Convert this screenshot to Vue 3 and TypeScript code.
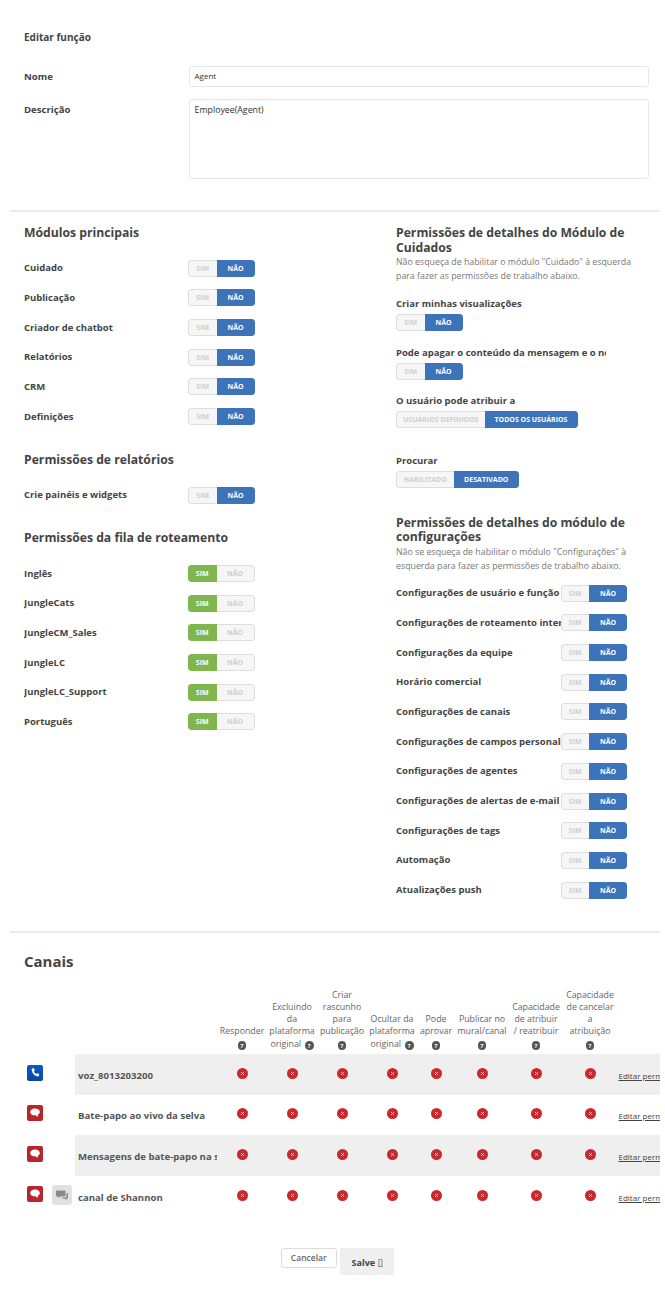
<script setup lang="ts">
const modules = ['Cuidado', 'Publicação', 'Criador de chatbot', 'Relatórios', 'CRM', 'Definições']
const queues = ['Inglês', 'JungleCats', 'JungleCM_Sales', 'JungleLC', 'JungleLC_Support', 'Português']
const settings = [
  'Configurações de usuário e função',
  'Configurações de roteamento interno',
  'Configurações da equipe',
  'Horário comercial',
  'Configurações de canais',
  'Configurações de campos personalizados',
  'Configurações de agentes',
  'Configurações de alertas de e-mail',
  'Configurações de tags',
  'Automação',
  'Atualizações push'
]
const headers: { lines: string[]; inline: boolean }[] = [
  { lines: ['Responder'], inline: false },
  { lines: ['Excluindo', 'da', 'plataforma', 'original'], inline: true },
  { lines: ['Criar', 'rascunho', 'para', 'publicação'], inline: false },
  { lines: ['Ocultar da', 'plataforma', 'original'], inline: true },
  { lines: ['Pode', 'aprovar'], inline: false },
  { lines: ['Publicar no', 'mural/canal'], inline: false },
  { lines: ['Capacidade', 'de atribuir', '/ reatribuir'], inline: false },
  { lines: ['Capacidade', 'de cancelar', 'a', 'atribuição'], inline: false }
]
const channels = [
  { name: 'voz_8013203200', kind: 'phone', extra: false },
  { name: 'Bate-papo ao vivo da selva', kind: 'chat', extra: false },
  { name: 'Mensagens de bate-papo na selva', kind: 'chat', extra: false },
  { name: 'canal de Shannon', kind: 'chat', extra: true }
]
</script>

<template>
  <div class="page">
    <section class="top">
      <div class="title">Editar função</div>
      <div class="form-row name-row">
        <label class="lbl">Nome</label>
        <div class="input">Agent</div>
      </div>
      <div class="form-row desc-row">
        <label class="lbl">Descrição</label>
        <div class="textarea">Employee(Agent)</div>
      </div>
    </section>

    <hr class="rule" />

    <section class="cols">
      <div class="left">
        <h3 class="h first">Módulos principais</h3>
        <div v-for="m in modules" :key="m" class="row">
          <span class="row-label">{{ m }}</span>
          <div class="tog">
            <span class="seg off s">SIM</span><span class="seg blue n">NÃO</span>
          </div>
        </div>
        <h3 class="h">Permissões de relatórios</h3>
        <div class="row">
          <span class="row-label">Crie painéis e widgets</span>
          <div class="tog">
            <span class="seg off s">SIM</span><span class="seg blue n">NÃO</span>
          </div>
        </div>
        <h3 class="h">Permissões da fila de roteamento</h3>
        <div v-for="q in queues" :key="q" class="row">
          <span class="row-label">{{ q }}</span>
          <div class="tog">
            <span class="seg green s">SIM</span><span class="seg off n">NÃO</span>
          </div>
        </div>
      </div>

      <div class="right">
        <h3 class="rh one">Permissões de detalhes do Módulo de Cuidados</h3>
        <p class="note">Não esqueça de habilitar o módulo "Cuidado" à esquerda para fazer as permissões de trabalho abaixo.</p>

        <div class="stack s0">
          <div class="stack-label">Criar minhas visualizações</div>
          <div class="tog"><span class="seg off s">SIM</span><span class="seg blue n">NÃO</span></div>
        </div>
        <div class="stack s1">
          <div class="stack-label">Pode apagar o conteúdo da mensagem e o nome do remetente</div>
          <div class="tog"><span class="seg off s">SIM</span><span class="seg blue n">NÃO</span></div>
        </div>
        <div class="stack s2">
          <div class="stack-label">O usuário pode atribuir a</div>
          <div class="tog"><span class="seg off w88">USUÁRIOS DEFINIDOS</span><span class="seg blue w93">TODOS OS USUÁRIOS</span></div>
        </div>
        <div class="stack s3">
          <div class="stack-label">Procurar</div>
          <div class="tog"><span class="seg off w57">HABILITADO</span><span class="seg blue w66">DESATIVADO</span></div>
        </div>

        <h3 class="rh two">Permissões de detalhes do módulo de configurações</h3>
        <p class="note">Não se esqueça de habilitar o módulo "Configurações" à esquerda para fazer as permissões de trabalho abaixo.</p>
        <div class="settings">
          <div v-for="c in settings" :key="c" class="row">
            <span class="row-label clip">{{ c }}</span>
            <div class="tog">
              <span class="seg off s">SIM</span><span class="seg blue n">NÃO</span>
            </div>
          </div>
        </div>
      </div>
    </section>

    <hr class="rule" />

    <section class="channels">
      <h2 class="canais">Canais</h2>
      <div class="head">
        <div class="spacer"></div>
        <div v-for="(h, i) in headers" :key="i" class="hcell">
          <div v-for="(l, j) in h.lines" :key="j">
            {{ l }}<span v-if="h.inline && j === h.lines.length - 1" class="help inl">?</span>
          </div>
          <div v-if="!h.inline"><span class="help">?</span></div>
        </div>
      </div>
      <div v-for="(ch, idx) in channels" :key="ch.name" class="ch-row" :class="{ alt: idx % 2 === 0 }">
        <div class="ch-icons">
          <span class="badge" :class="ch.kind">
            <svg v-if="ch.kind === 'phone'" viewBox="0 0 16 16" width="16" height="16">
              <path fill="#fff" d="M5.2 3.6 6.6 3.3c.3 0 .4.1.5.3l.6 1.7c.1.2 0 .4-.2.6l-.8.7c.4 1 1.2 1.8 2.3 2.4l.8-.7c.2-.2.4-.2.6-.1l1.6.8c.2.1.3.3.2.6l-.4 1.4c-.1.3-.3.4-.6.4C7.600 11.200 4.800 8.400 4.700 4.200c0-.3.2-.5.5-.6z" />
            </svg>
            <svg v-else viewBox="0 0 16 16" width="16" height="16">
              <path fill="#fff" d="M8 3.400c2.700 0 4.800 1.500 4.800 3.500 0 1.300-.9 2.400-2.200 3l.4 2-2.600-1.600h-.4c-2.700 0-4.800-1.500-4.800-3.400S5.300 3.400 8 3.400z" />
            </svg>
          </span>
          <span v-if="ch.extra" class="badge2">
            <svg viewBox="0 0 20 20" width="20" height="20">
              <path fill="#8a8a8a" d="M5 5.500h7.500c.5 0 1 .4 1 1v4c0 .6-.5 1-1 1H8l-2 1.600v-1.600H5c-.6 0-1-.4-1-1v-4c0-.6.4-1 1-1z" />
              <path fill="#8a8a8a" d="M14.500 8H15c.6 0 1 .4 1 1v3.500c0 .6-.4 1-1 1h-.5V15l-2-1.500H9.300l1-1h3c.7 0 1.200-.5 1.200-1.200z" />
            </svg>
          </span>
        </div>
        <div class="ch-body">
          <div class="ch-name">{{ ch.name }}</div>
          <div v-for="(h, i) in headers" :key="i" class="xcell">
            <svg viewBox="0 0 10 10" width="11" height="11">
              <circle cx="5" cy="5" r="5" fill="#c9282e" />
              <path d="M3.700 3.700l2.600 2.600M6.300 3.700 3.700 6.300" stroke="#f3c9cb" stroke-width=".9" fill="none" />
            </svg>
          </div>
          <a class="edit">Editar permissões</a>
        </div>
      </div>
    </section>

    <div class="actions">
      <button class="cancel" type="button">Cancelar</button>
      <button class="save" type="button">Salve <span class="tofu">▯</span></button>
    </div>
  </div>
</template>

<style>
html, body { margin: 0; background: #fff; }
</style>

<style scoped>
* { box-sizing: border-box; }
.page {
  width: 660px;
  height: 1296px;
  overflow: hidden;
  background: #fff;
  font-family: "Open Sans", "Liberation Sans", sans-serif;
  color: #444;
}
.top { height: 210px; padding: 29px 11px 0 24px; }
.title { font-size: 10px; font-weight: 700; line-height: 16px; color: #444; }
.form-row { display: flex; }
.name-row { margin-top: 21px; }
.desc-row { margin-top: 12px; }
.lbl { width: 164.500px; flex: none; font-size: 9.600px; font-weight: 700; line-height: 16px; padding-top: 2.500px; color: #444; }
.input {
  width: 461px; height: 21px; border: 1.5px solid #e6e6e6; border-radius: 3px;
  font-size: 8px; line-height: 18px; padding-left: 5px; color: #333;
}
.textarea {
  width: 461px; height: 80px; border: 1.5px solid #e6e6e6; border-radius: 3px;
  font-size: 8.800px; line-height: 14px; padding: 3px 5px; color: #333;
}
.rule { margin: 0 0 0 10px; width: 650px; height: 2px; border: 0; background: #ebebeb; }
.cols { display: flex; height: 719px; }
.left { width: 372px; margin-left: 24px; flex: none; }
.right { flex: 1; min-width: 0; }
.h { margin: 20.600px 0 13.200px; font-size: 12.200px; font-weight: 700; line-height: 15px; color: #444; }
.h.first { margin-top: 12.500px; margin-bottom: 13.800px; }
.row { display: flex; align-items: center; height: 29.700px; }
.row-label { width: 164px; flex: none; font-size: 9.500px; font-weight: 700; color: #444; white-space: nowrap; overflow: hidden; padding-bottom: 1px; }
.clip { width: 164.500px; }
.tog { display: flex; width: fit-content; height: 17px; border-radius: 3px; overflow: hidden; }
.seg { display: flex; align-items: center; justify-content: center; height: 17px; font-size: 7px; font-weight: 700; white-space: nowrap; }
.off { background: #f6f6f6; color: #cfcfcf; border: 1.5px solid #dedede; }
.s.off, .w88.off, .w57.off { border-right: 0; border-radius: 3px 0 0 3px; }
.n.off { border-left: 0; border-radius: 0 3px 3px 0; }
.blue { background: #3d73b9; color: #fff; border-radius: 0 3px 3px 0; }
.green { background: #7fb64e; color: #fff; border-radius: 3px 0 0 3px; }
.s { width: 28.500px; }
.n { width: 38px; }
.w88 { width: 88.500px; }
.w93 { width: 93px; }
.w57 { width: 57.500px; }
.w66 { width: 65.500px; }
.rh { margin: 0; font-size: 12.200px; font-weight: 700; line-height: 14.500px; color: #444; width: 250px; }
.rh.one { margin-top: 14px; }
.rh.two { margin-top: 27.500px; }
.note { margin: 0; font-size: 8.800px; line-height: 14px; color: #777; width: 250px; }
.stack-label { font-size: 9.500px; font-weight: 700; line-height: 14px; color: #444; margin-bottom: 3px; width: 209.500px; white-space: nowrap; overflow: hidden; }
.s0 { margin-top: 14px; }
.s1 { margin-top: 15px; }
.s2 { margin-top: 14px; }
.s3 { margin-top: 26px; }
.settings { margin-top: 5.850px; }
.channels { padding-top: 19px; }
.canais { margin: 0 0 0 24px; font-size: 15px; font-weight: 700; line-height: 18px; color: #444; }
.head { display: flex; align-items: flex-end; height: 84px; padding-bottom: 4px; }
.spacer { width: 217px; flex: none; }
.hcell { flex: none; font-size: 8.800px; line-height: 12.300px; color: #666; text-align: center; white-space: nowrap; }
.hcell:nth-child(2), .hcell:nth-child(3), .hcell:nth-child(4), .hcell:nth-child(5) { width: 50px; }
.hcell:nth-child(6) { width: 38px; }
.hcell:nth-child(7), .hcell:nth-child(8), .hcell:nth-child(9) { width: 54px; }
.help {
  display: inline-flex; align-items: center; justify-content: center;
  width: 8.500px; height: 8.500px; border-radius: 50%; background: #555; color: #fff;
  font-size: 6px; font-weight: 700; line-height: 8px; vertical-align: -1px;
}
.inl { margin-left: 4px; }
.ch-row { display: flex; height: 40.600px; }
.ch-icons { width: 75px; flex: none; display: flex; align-items: flex-start; padding: 10.500px 0 0 27px; }
.badge { width: 16px; height: 16px; border-radius: 2px; display: block; flex: none; }
.badge svg, .badge2 svg { display: block; }
.badge.phone { background: linear-gradient(#0a5cc4, #0a46a8); }
.badge.chat { background: #b8262c; }
.badge2 { width: 20px; height: 20px; border-radius: 3px; background: #e1e1e1; margin: -1.500px 0 0 9px; flex: none; }
.ch-body { flex: 1; display: flex; align-items: center; min-width: 0; overflow: hidden; }
.alt .ch-body { background: #efefef; }
.ch-name { width: 142px; flex: none; padding-left: 3px; font-size: 9.600px; font-weight: 700; color: #555; white-space: nowrap; overflow: hidden; padding-top: 2px; }
.xcell { flex: none; display: flex; justify-content: center; padding-bottom: 2px; }
.xcell svg { display: block; }
.xcell:nth-child(2), .xcell:nth-child(3), .xcell:nth-child(4), .xcell:nth-child(5) { width: 50px; }
.xcell:nth-child(6) { width: 38px; }
.xcell:nth-child(7), .xcell:nth-child(8), .xcell:nth-child(9) { width: 54px; }
.edit { flex: none; margin-left: 1.500px; padding-top: 2px; font-size: 8px; color: #444; text-decoration: underline; white-space: nowrap; }
.actions { display: flex; justify-content: center; align-items: flex-start; gap: 3.500px; margin-top: 31.600px; padding-left: 15px; }
.cancel {
  width: 56px; height: 20px; padding: 0; background: #fff; border: 1.5px solid #dcdcdc; border-radius: 3px;
  font: 600 8.500px "Open Sans", sans-serif; color: #666;
}
.save {
  width: 54px; height: 27px; padding: 2px 0 0; background: #efefef; border: 0;
  font: 700 9px "Open Sans", sans-serif; color: #444;
}
.tofu { font-family: "DejaVu Sans", sans-serif; font-weight: 400; font-size: 10px; }
</style>
